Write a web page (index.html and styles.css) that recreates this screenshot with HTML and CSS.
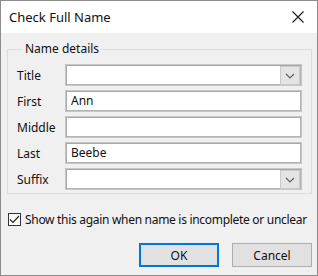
FILE: index.html
```html
<!DOCTYPE html>
<html lang="en">

<head>
  <meta charset="UTF-8">
  <title>Check Full Name</title>
  <link rel="stylesheet" href="styles.css">
</head>

<body>
  <div class="window">
    <div class="titlebar">
      <span class="title">Check Full Name</span>
      <span class="close">
        <svg width="12" height="12" viewBox="0 0 12 12">
          <path d="M0.5 0.5 L11.5 11.5 M11.5 0.5 L0.5 11.5" stroke="#1a1a1a" stroke-width="1.1" fill="none" />
        </svg>
      </span>
    </div>

    <div class="content">
      <fieldset class="group">
        <legend>Name details</legend>

        <div class="row">
          <label>Title</label>
          <div class="field combo">
            <span class="drop">
              <svg width="10" height="6" viewBox="0 0 10 6">
                <path d="M1 1 L5 5 L9 1" stroke="#606060" stroke-width="1.2" fill="none" />
              </svg>
            </span>
          </div>
        </div>
        <div class="row">
          <label>First</label>
          <div class="field">Ann</div>
        </div>
        <div class="row">
          <label>Middle</label>
          <div class="field"></div>
        </div>
        <div class="row">
          <label>Last</label>
          <div class="field">Beebe</div>
        </div>
        <div class="row">
          <label>Suffix</label>
          <div class="field combo">
            <span class="drop">
              <svg width="10" height="6" viewBox="0 0 10 6">
                <path d="M1 1 L5 5 L9 1" stroke="#606060" stroke-width="1.2" fill="none" />
              </svg>
            </span>
          </div>
        </div>
      </fieldset>

      <div class="check">
        <span class="box">
          <svg width="11" height="11" viewBox="0 0 11 11">
            <path d="M1 5.5 L4 8.5 L10 2" stroke="#222" stroke-width="1.2" fill="none" />
          </svg>
        </span>
        <span class="check-label">Show this again when name is incomplete or unclear</span>
      </div>

      <div class="buttons">
        <button class="btn default">OK</button>
        <button class="btn">Cancel</button>
      </div>
    </div>
  </div>
</body>

</html>
```

FILE: styles.css
```css
* {
  box-sizing: border-box;
  margin: 0;
  padding: 0;
}

body {
  margin: 0;
  font-family: "Noto Sans", "Open Sans", sans-serif;
  font-size: 12px;
  color: #111;
}

.window {
  width: 318px;
  height: 276px;
  border: 1px solid #8c8c8c;
  background: #f0f0f0;
  display: flex;
  flex-direction: column;
}

.titlebar {
  flex-shrink: 0;
  height: 32px;
  background: #fff;
  display: flex;
  align-items: center;
  justify-content: space-between;
  padding: 0 13px 0 8px;
}

.title {
  font-size: 13px;
  color: #111;
}

.close {
  display: flex;
}

.content {
  padding: 6px 5px 0 6px;
}

.group {
  border: 1px solid #dcdcdc;
  padding: 1px 9px 3px 9px;
}

.group legend {
  margin-left: 6px;
  padding: 0 2px;
  line-height: 20px;
}

.row {
  display: flex;
  align-items: center;
  height: 22px;
  margin-top: 4px;
}

.row label {
  width: 48px;
}

.field {
  flex: 1;
  height: 22px;
  background: #fff;
  border: 1px solid #c6c6c6;
  box-shadow: inset 1px 1px 0 #a9a9a9, inset -1px -1px 0 #b4b4b4;
  padding: 0 5px;
  line-height: 20px;
  position: relative;
}

.drop {
  position: absolute;
  right: 1px;
  top: 1px;
  width: 20px;
  height: 19px;
  background: #e4e4e4;
  border: 1px solid #c9c9c9;
  display: flex;
  align-items: center;
  justify-content: center;
}

.check {
  display: flex;
  align-items: center;
  gap: 4px;
  height: 16px;
  margin-top: 17px;
  margin-left: 1px;
}

.check-label {
  white-space: nowrap;
  letter-spacing: -0.3px;
}

.box {
  width: 13px;
  height: 13px;
  background: #fff;
  border: 1px solid #333;
  display: flex;
  align-items: center;
  justify-content: center;
}

.buttons {
  display: flex;
  justify-content: flex-end;
  gap: 13px;
  margin-top: 16px;
}

.btn {
  width: 80px;
  height: 24px;
  background: #e1e1e1;
  border: 1px solid #adadad;
  font-family: inherit;
  font-size: 12px;
  color: #111;
}

.btn.default {
  border: 2px solid #0078d7;
}
```
